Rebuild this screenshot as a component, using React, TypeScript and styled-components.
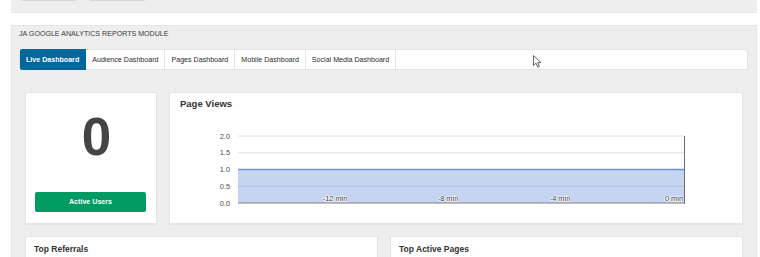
import React from "react";
import styled, { createGlobalStyle } from "styled-components";

const Global = createGlobalStyle`
  html, body { margin: 0; padding: 0; background: #ffffff; }
  body { font-family: "Liberation Sans", Arial, sans-serif; color: #333; overflow: hidden; }
  * { box-sizing: border-box; }
`;

const Page = styled.div`
  width: 760px;
  height: 257px;
  padding: 0 3px 0 11px;
  position: relative;
  overflow: hidden;
`;

const TopPanel = styled.div`
  height: 13px;
  background: #eeeeee;
  border-bottom: 1px solid #e6e6e6;
  display: flex;
  gap: 12px;
  padding: 0 9px;
`;

const TopButton = styled.div`
  width: 57px;
  height: 20px;
  margin-top: -19px;
  background: #ffffff;
  border: 1px solid #d6d6d6;
  border-radius: 2px;
`;

const Module = styled.div`
  margin-top: 12px;
  background: #eeeeee;
  border: 1px solid #e6e6e6;
  border-bottom: none;
  padding: 3px 8px 0 7px;
  height: 240px;
`;

const ModuleTitle = styled.div`
  font-size: 7.1px;
  line-height: 10px;
  color: #3a3a3a;
  text-transform: uppercase;
  margin-bottom: 10px;
`;

const Tabs = styled.div`
  display: flex;
  height: 21px;
  background: #ffffff;
  border: 1px solid #e4e4e4;
  border-radius: 2px;
`;

const Tab = styled.div<{ $active?: boolean }>`
  display: flex;
  align-items: center;
  padding: 0 6px;
  margin: -1px 0;
  font-size: 7.1px;
  color: ${(p) => (p.$active ? "#ffffff" : "#2a2a2a")};
  font-weight: ${(p) => (p.$active ? "bold" : "normal")};
  background: ${(p) => (p.$active ? "#02689c" : "transparent")};
  border-right: 1px solid ${(p) => (p.$active ? "#02689c" : "#e4e4e4")};
  border-radius: ${(p) => (p.$active ? "2px 0 0 2px" : "0")};
  white-space: nowrap;
`;

const Content = styled.div`
  padding: 22px 5px 0 6px;
  display: grid;
  grid-template-columns: 132px 1fr;
  grid-template-rows: 132px auto;
  gap: 12px;
`;

const Card = styled.div`
  background: #ffffff;
  border: 1px solid #e5e5e5;
  box-shadow: 0 1px 1px rgba(0, 0, 0, 0.04);
`;

const UsersCard = styled(Card)`
  display: flex;
  flex-direction: column;
  align-items: center;
  justify-content: space-between;
  padding: 17px 10px 11px 9px;
`;

const BigNumber = styled.div`
  font-size: 53px;
  line-height: 53px;
  font-weight: bold;
  color: #444;
  padding-left: 12px;
`;

const GreenButton = styled.div`
  width: 100%;
  height: 20px;
  background: #009a63;
  border-radius: 2px;
  color: #ffffff;
  font-size: 7.1px;
  font-weight: bold;
  display: flex;
  align-items: center;
  justify-content: center;
`;

const ChartCard = styled(Card)`
  padding: 5px 10px 0 10px;
`;

const CardTitle = styled.div<{ $size: number }>`
  font-size: ${(p) => p.$size}px;
  line-height: 12px;
  font-weight: bold;
  color: #333;
`;

const ChartSvg = styled.svg`
  display: block;
  width: 552px;
  height: 104px;
`;

const BottomRow = styled.div`
  grid-column: 1 / 3;
  display: grid;
  grid-template-columns: 1fr 1fr;
  gap: 12px;
`;

const ListCard = styled(Card)`
  height: 40px;
  padding: 6px 8px;
`;

const Cursor = styled.svg`
  position: absolute;
  left: 533px;
  top: 55px;
  width: 9px;
  height: 13px;
`;

const yTicks = [
  { v: "2.0", y: 26 },
  { v: "1.5", y: 42.75 },
  { v: "1.0", y: 59.5 },
  { v: "0.5", y: 76.25 },
  { v: "0.0", y: 93 },
];

const xTicks = [
  { t: "-12 min", x: 155, a: "middle" },
  { t: "-8 min", x: 268, a: "middle" },
  { t: "-4 min", x: 380, a: "middle" },
  { t: "0 min", x: 503, a: "end" },
];

function Chart() {
  const left = 58;
  const right = 505;
  return (
    <ChartSvg viewBox="0 0 552 104">
      <line x1={left} x2={right} y1={26} y2={26} stroke="#dedede" strokeWidth={1} />
      <line x1={left} x2={right} y1={42.75} y2={42.75} stroke="#dedede" strokeWidth={1} />
      <rect x={left} y={59.5} width={right - left} height={33.5} fill="#c5d5f1" />
      <line x1={left} x2={right} y1={76.25} y2={76.25} stroke="#abc0e4" strokeWidth={1} />
      <line x1={left} x2={right} y1={59.5} y2={59.5} stroke="#6d95db" strokeWidth={1.4} />
      <line x1={left} x2={right} y1={93} y2={93} stroke="#808080" strokeWidth={1} />
      <line x1={504.5} x2={504.5} y1={26} y2={93.5} stroke="#6a6a6a" strokeWidth={1} />
      {yTicks.map((t) => (
        <text
          key={t.v}
          x={50}
          y={t.y + 2.6}
          textAnchor="end"
          fontSize={7.4}
          fill="#4a4a4a"
          fontFamily="Liberation Sans, Arial, sans-serif"
        >
          {t.v}
        </text>
      ))}
      {xTicks.map((t) => (
        <text
          key={t.t}
          x={t.x}
          y={90.5}
          textAnchor={t.a as "middle" | "end"}
          fontSize={7.4}
          fill="#3a3a3a"
          stroke="#ffffff"
          strokeWidth={1.2}
          paintOrder="stroke"
          fontFamily="Liberation Sans, Arial, sans-serif"
        >
          {t.t}
        </text>
      ))}
    </ChartSvg>
  );
}

export default function App() {
  return (
    <Page>
      <Global />
      <TopPanel>
        <TopButton />
        <TopButton />
      </TopPanel>
      <Module>
        <ModuleTitle>JA Google Analytics Reports Module</ModuleTitle>
        <Tabs>
          <Tab $active>Live Dashboard</Tab>
          <Tab>Audience Dashboard</Tab>
          <Tab>Pages Dashboard</Tab>
          <Tab>Mobile Dashboard</Tab>
          <Tab>Social Media Dashboard</Tab>
        </Tabs>
        <Content>
          <UsersCard>
            <BigNumber>0</BigNumber>
            <GreenButton>Active Users</GreenButton>
          </UsersCard>
          <ChartCard>
            <CardTitle $size={9.5}>Page Views</CardTitle>
            <Chart />
          </ChartCard>
          <BottomRow>
            <ListCard>
              <CardTitle $size={8.5}>Top Referrals</CardTitle>
            </ListCard>
            <ListCard>
              <CardTitle $size={8.5}>Top Active Pages</CardTitle>
            </ListCard>
          </BottomRow>
        </Content>
      </Module>
      <Cursor viewBox="0 0 9 13">
        <path d="M0.5 0.5 L0.5 10.5 L3 8.2 L4.8 12.2 L6.4 11.5 L4.7 7.6 L8 7.6 Z" fill="#ffffff" stroke="#555" strokeWidth={0.9} strokeLinejoin="round" />
      </Cursor>
    </Page>
  );
}
